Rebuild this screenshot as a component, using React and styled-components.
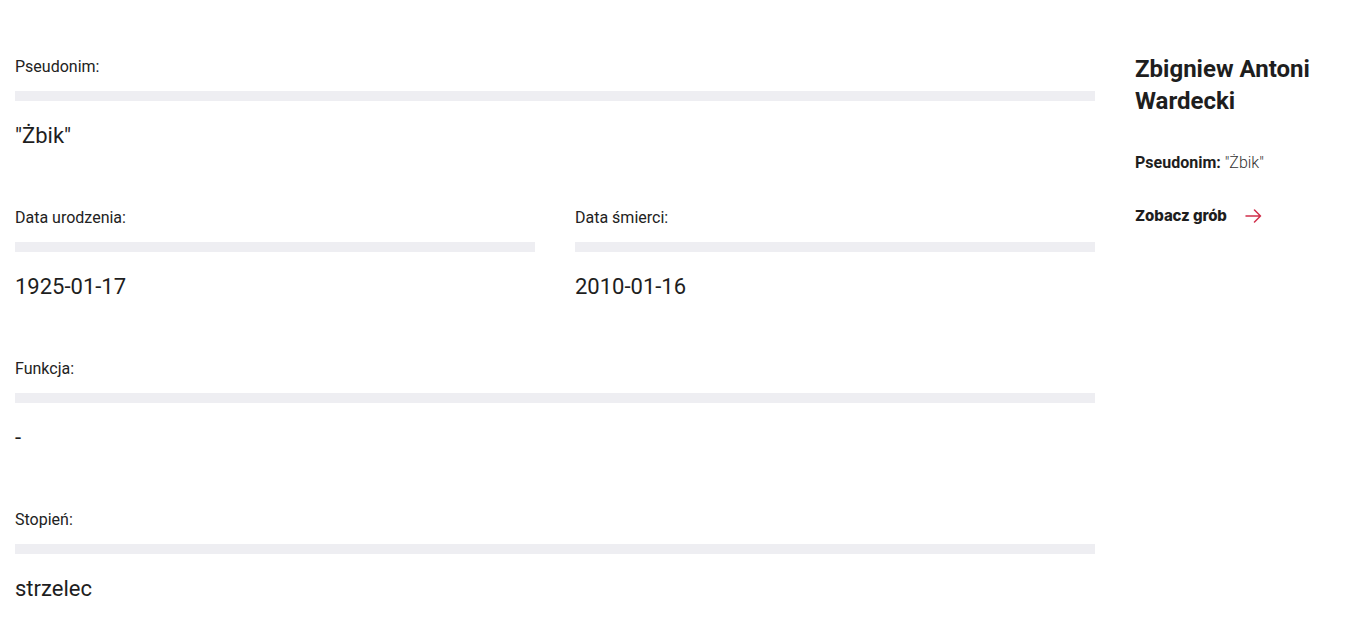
import React from 'react';
import styled, { createGlobalStyle } from 'styled-components';

const GlobalStyle = createGlobalStyle`
  html, body {
    margin: 0;
    padding: 0;
    background: #ffffff;
  }
  body {
    font-family: Roboto, "Noto Sans", Arial, sans-serif;
    color: #1e1e1e;
  }
`;

const TopShade = styled.div`
  height: 0;
  box-shadow: 0 1px 8px rgba(0, 0, 0, 0.07);
`;

const Page = styled.main`
  display: flex;
  align-items: flex-start;
  gap: 40px;
  padding: 57px 15px 0 15px;
  height: 567px;
  overflow: hidden;
`;

const Details = styled.section`
  width: 1080px;
  flex-shrink: 0;
`;

const Row = styled.div`
  display: flex;
  gap: 40px;
`;

const Field = styled.div`
  flex: 1;
  margin-bottom: 57px;
`;

const Label = styled.div`
  font-size: 16px;
  line-height: 20px;
  color: #222222;
`;

const Bar = styled.div`
  height: 10px;
  margin: 14px 0 20px;
  background: #eeeef2;
`;

const Value = styled.div`
  font-size: 22px;
  line-height: 30px;
  color: #1e1e1e;
`;

const Aside = styled.aside`
  margin-top: -4px;
  width: 190px;
`;

const Name = styled.h2`
  margin: 0 0 36px;
  font-size: 24px;
  line-height: 32px;
  font-weight: 700;
  color: #1e1e1e;
`;

const Alias = styled.p`
  margin: 0 0 33px;
  font-size: 16px;
  line-height: 20px;

  strong {
    font-weight: 700;
  }

  span {
    font-weight: 300;
    color: #333333;
  }
`;

const GraveLink = styled.a`
  display: inline-flex;
  align-items: center;
  gap: 18px;
  font-family: Inter, "Noto Sans", sans-serif;
  font-weight: 800;
  font-size: 15px;
  line-height: 20px;
  letter-spacing: -0.1px;
  color: #1e1e1e;
  text-decoration: none;

  svg {
    display: block;
  }
`;

function DetailField({ label, value }) {
  return (
    <Field>
      <Label>{label}</Label>
      <Bar />
      <Value>{value}</Value>
    </Field>
  );
}

export default function App() {
  return (
    <>
      <GlobalStyle />
      <TopShade />
      <Page>
        <Details>
          <DetailField label="Pseudonim:" value={'"Żbik"'} />
          <Row>
            <DetailField label="Data urodzenia:" value="1925-01-17" />
            <DetailField label="Data śmierci:" value="2010-01-16" />
          </Row>
          <DetailField label="Funkcja:" value="-" />
          <DetailField label="Stopień:" value="strzelec" />
        </Details>
        <Aside>
          <Name>Zbigniew Antoni Wardecki</Name>
          <Alias>
            <strong>Pseudonim:</strong> <span>"Żbik"</span>
          </Alias>
          <GraveLink href="#">
            Zobacz grób
            <svg width="17" height="14" viewBox="0 0 17 14" fill="none">
              <path
                d="M1 7h14.5M9.5 1l6 6-6 6"
                stroke="#d12f4b"
                strokeWidth="1.5"
                strokeLinecap="round"
                strokeLinejoin="round"
              />
            </svg>
          </GraveLink>
        </Aside>
      </Page>
    </>
  );
}
